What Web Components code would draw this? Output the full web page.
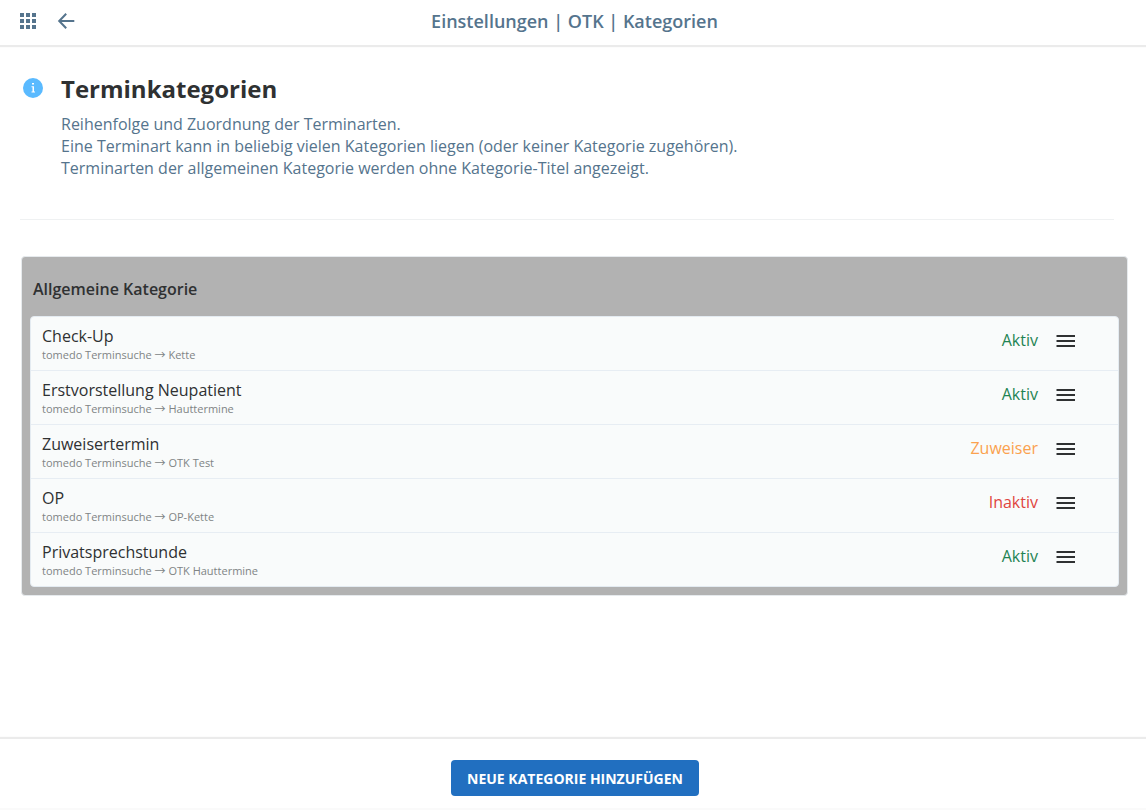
<!DOCTYPE html>
<html lang="de">
<head>
<meta charset="utf-8">
<meta name="viewport" content="width=device-width, initial-scale=1">
<title>Einstellungen | OTK | Kategorien</title>
<style>
  html, body { height: 100%; }
  body {
    margin: 0;
    background: #fff;
    color: #2f3132;
    font-family: "Open Sans", "Noto Sans", sans-serif;
    font-size: 16px;
    line-height: 22px;
  }
</style>
</head>
<body>
<settings-page>
  <app-header slot="header">Einstellungen | OTK | Kategorien</app-header>
  <page-intro>
    <span slot="title">Terminkategorien</span>
    Reihenfolge und Zuordnung der Terminarten.<br>
    Eine Terminart kann in beliebig vielen Kategorien liegen (oder keiner Kategorie zugehören).<br>
    Terminarten der allgemeinen Kategorie werden ohne Kategorie-Titel angezeigt.
  </page-intro>
  <category-card>
    <span slot="title">Allgemeine Kategorie</span>
    <appointment-row state="aktiv">Check-Up<span slot="path">tomedo Terminsuche → Kette</span><span slot="state">Aktiv</span></appointment-row>
    <appointment-row state="aktiv">Erstvorstellung Neupatient<span slot="path">tomedo Terminsuche → Hauttermine</span><span slot="state">Aktiv</span></appointment-row>
    <appointment-row state="zuweiser">Zuweisertermin<span slot="path">tomedo Terminsuche → OTK Test</span><span slot="state">Zuweiser</span></appointment-row>
    <appointment-row state="inaktiv">OP<span slot="path">tomedo Terminsuche → OP-Kette</span><span slot="state">Inaktiv</span></appointment-row>
    <appointment-row state="aktiv">Privatsprechstunde<span slot="path">tomedo Terminsuche → OTK Hauttermine</span><span slot="state">Aktiv</span></appointment-row>
  </category-card>
  <action-bar slot="footer">NEUE KATEGORIE HINZUFÜGEN</action-bar>
</settings-page>

<template id="settings-page">
  <style>
    :host { display: flex; flex-direction: column; min-height: 100%; box-sizing: border-box; }
    main { flex: 1; padding: 29px 18px 32px 21px; }
  </style>
  <slot name="header"></slot>
  <main><slot></slot></main>
  <slot name="footer"></slot>
</template>

<template id="app-header">
  <style>
    :host { display: block; color: #55748d; }
    header {
      display: grid; grid-template-columns: 1fr auto 1fr; align-items: center;
      min-height: 45px; padding: 0 14px 0 17px; box-sizing: border-box;
      box-shadow: 0 2px 1px rgba(0, 0, 0, .08);
    }
    nav { display: flex; gap: 16px; padding-bottom: 3px; }
    button { display: grid; place-items: center; width: 22px; height: 22px; padding: 0; border: 0; background: none; color: inherit; cursor: pointer; }
    svg { display: block; }
    h1 { margin: 0; padding-bottom: 3px; font-size: 18px; line-height: 24px; font-weight: 600; }
  </style>
  <header>
    <nav>
      <button type="button" aria-label="Menü"><svg width="18" height="18" viewBox="0 0 18 18" fill="currentColor"><path d="M1 1h4v4H1zM7 1h4v4H7zM13 1h4v4h-4zM1 7h4v4H1zM7 7h4v4H7zM13 7h4v4h-4zM1 13h4v4H1zM7 13h4v4H7zM13 13h4v4h-4z"/></svg></button>
      <button type="button" aria-label="Zurück"><svg width="18" height="18" viewBox="0 0 18 18" fill="none" stroke="currentColor" stroke-width="2"><path d="M9.200 1.700 2.200 9l7 7.300M2 9h15.300"/></svg></button>
    </nav>
    <h1><slot></slot></h1>
  </header>
</template>

<template id="page-intro">
  <style>
    :host { display: block; margin: 0 14px 36px -1px; }
    section { display: flex; gap: 17px; align-items: flex-start; padding: 0 0 40px 2px; border-bottom: 1px solid #eff1f2; }
    svg { flex: none; margin-top: 3px; }
    h2 { margin: 0 0 9px; font-size: 24px; line-height: 30px; font-weight: 700; }
    p { margin: 0; color: #55748d; }
  </style>
  <section>
    <svg width="22" height="22" viewBox="0 0 22 22" aria-hidden="true"><circle cx="11" cy="11" r="10" fill="#5abaff"/><path d="M10 6h2v1.500h-2zM9.500 9.200h2.500v5.300h1v1H9.500v-1h1v-4.300h-1z" fill="#fff"/></svg>
    <div>
      <h2><slot name="title"></slot></h2>
      <p><slot></slot></p>
    </div>
  </section>
</template>

<template id="category-card">
  <style>
    :host { display: block; }
    section { padding: 21px 8px 8px; background: #b2b2b2; border: 1px solid #e6eaed; border-radius: 4px; }
    h3 { margin: 0 0 16px; padding-left: 3px; font-size: 16px; line-height: 22px; font-weight: 600; }
    .rows { border: 1px solid #e4ebf1; border-radius: 4px; background: #f9fbfb; overflow: hidden; }
  </style>
  <section>
    <h3><slot name="title"></slot></h3>
    <div class="rows"><slot></slot></div>
  </section>
</template>

<template id="appointment-row">
  <style>
    :host { display: block; }
    :host(:not(:last-of-type)) { border-bottom: 1px solid #e7edf3; }
    .row { display: flex; justify-content: space-between; align-items: flex-start; min-height: 53px; padding: 8px 42px 0 11px; box-sizing: border-box; }
    .path { color: #808485; font-family: "Open Sans", "Noto Sans CJK JP", sans-serif; font-size: 11px; line-height: 16px; }
    .end { display: flex; align-items: center; gap: 18px; padding-top: 4px; }
    .state { color: #1f8453; }
    :host([state="zuweiser"]) .state { color: #fba14e; }
    :host([state="inaktiv"]) .state { color: #e0453e; }
    button { display: block; padding: 2px 0 0; border: 0; background: none; color: #2f3132; cursor: grab; }
    svg { display: block; }
  </style>
  <div class="row">
    <div>
      <div><slot></slot></div>
      <div class="path"><slot name="path"></slot></div>
    </div>
    <div class="end">
      <span class="state"><slot name="state"></slot></span>
      <button type="button" aria-label="Verschieben"><svg width="20" height="12" viewBox="0 0 20 12" fill="currentColor"><path d="M.5 0h18.500v2H.5zM.5 5h18.500v2H.5zM.5 10h18.500v2H.5z"/></svg></button>
    </div>
  </div>
</template>

<template id="action-bar">
  <style>
    :host { display: block; }
    footer { display: flex; justify-content: center; padding: 21px 16px 12px 20px; border-bottom: 2px solid #fafafa; box-shadow: 0 -1px 1px 1px rgba(0, 0, 0, .08); }
    button { min-height: 36px; padding: 2px 16px 0; border: 0; border-radius: 4px; background: #216fc0; color: #fff; font: 700 14px/20px "Open Sans", "Noto Sans", sans-serif; cursor: pointer; }
  </style>
  <footer><button type="button"><slot></slot></button></footer>
</template>

<script>
  for (const name of ["settings-page", "app-header", "page-intro", "category-card", "appointment-row", "action-bar"]) {
    customElements.define(name, class extends HTMLElement {
      constructor() {
        super();
        this.attachShadow({ mode: "open" }).append(document.getElementById(name).content.cloneNode(true));
      }
    });
  }
</script>
</body>
</html>
